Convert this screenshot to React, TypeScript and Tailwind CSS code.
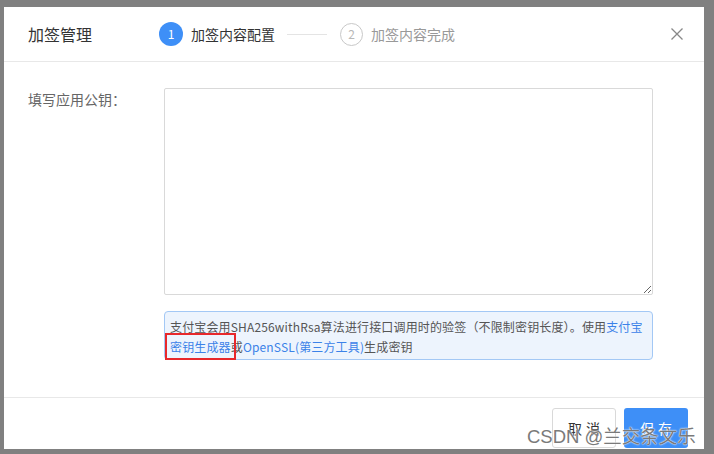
import React from "react";

export default function App() {
  const font = { fontFamily: '"Noto Sans CJK SC", "Noto Sans", sans-serif' };
  return (
    <div className="w-[714px] h-[454px] bg-[#808080] pt-[7px] pl-[4px] relative overflow-hidden" style={font}>
      <div className="w-[700px] h-[442px] bg-white flex flex-col overflow-hidden">
        {/* header */}
        <div className="h-[55px] shrink-0 flex items-center pl-[24px] pr-[20px] border-b border-[#e8e8e8]">
          <div className="w-[131px] text-[16px] text-[#333]">加签管理</div>
          <div className="flex items-center">
            <div className="w-[24px] h-[24px] rounded-full bg-[#3e8ff7] text-white text-[12px] flex items-center justify-center">1</div>
            <div className="ml-[8px] text-[14px] text-[#333]">加签内容配置</div>
            <div className="ml-[12px] w-[40px] h-px bg-[#e4e4e4]"></div>
            <div className="ml-[13px] w-[23px] h-[23px] rounded-full border border-[#c8c8c8] text-[#b8b8b8] text-[12px] flex items-center justify-center">2</div>
            <div className="ml-[8px] text-[14px] text-[#999]">加签内容完成</div>
          </div>
          <div className="ml-auto">
            <svg width="12" height="12" viewBox="0 0 12 12" className="mr-[1px]">
              <path d="M0.5 0.5 L11.5 11.5 M11.5 0.5 L0.5 11.5" stroke="#888" strokeWidth="1.3" fill="none" />
            </svg>
          </div>
        </div>
        {/* body */}
        <div className="flex-1 pt-[26px] pl-[24px] pr-[51px]">
          <div className="flex">
            <div className="w-[136px] shrink-0 text-[14px] text-[#666] pt-[1px] leading-[20px]">填写应用公钥：</div>
            <div className="flex-1">
              <textarea className="block w-[489px] h-[207px] border border-[#d9d9d9] rounded-[2px] outline-none" />
              <div className="relative mt-[16px] w-[489px] h-[49px] bg-[#edf4fd] border border-[#a3c8f5] rounded-[4px] pl-[5px] pr-[4px] pt-[5px] text-[12px] leading-[20px] text-[#555] tracking-[0.15px]">
                支付宝会用SHA256withRsa算法进行接口调用时的验签（不限制密钥长度）。使用<span className="text-[#3b82e8]">支付宝密钥生成器</span>或<span className="text-[#3b82e8]">OpenSSL(第三方工具)</span>生成密钥
                <div className="absolute left-[0px] top-[21px] w-[71px] h-[27px] border-2 border-[#e8282b]"></div>
              </div>
            </div>
          </div>
        </div>
        {/* footer */}
        <div className="h-[52px] shrink-0 border-t border-[#e8e8e8] flex justify-end items-start pt-[10px] pr-[16px] gap-[8px]">
          <button className="w-[64px] h-[40px] border border-[#d9d9d9] rounded-[3px] bg-white text-[14px] text-[#333] tracking-[4px] pl-[4px]">取消</button>
          <button className="w-[64px] h-[40px] rounded-[3px] bg-[#3e8ff7] text-[14px] text-white tracking-[4px] pl-[4px]">保存</button>
        </div>
      </div>
      <div
        className="absolute left-[527px] top-[425px] text-[18.5px] text-[#7a7a7a] whitespace-nowrap leading-[24px]"
        style={{ textShadow: "0 0 1px #fff, 0 0 2px #fff", fontFamily: '"Liberation Sans", "Noto Sans CJK SC", sans-serif' }}
      >
        CSDN @兰交条文乐
      </div>
    </div>
  );
}
